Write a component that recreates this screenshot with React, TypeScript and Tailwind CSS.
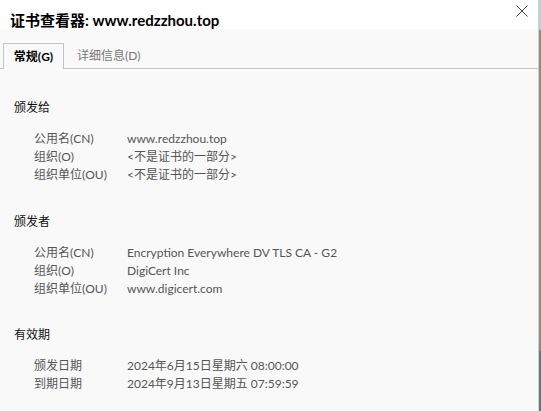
const FONT = { fontFamily: 'Lato, "Noto Sans CJK SC", sans-serif' }

type Row = { label: string; value: string }

const sections: { title: string; gap: string; rows: Row[] }[] = [
  {
    title: '颁发给',
    gap: 'mt-0',
    rows: [
      { label: '公用名(CN)', value: 'www.redzzhou.top' },
      { label: '组织(O)', value: '<不是证书的一部分>' },
      { label: '组织单位(OU)', value: '<不是证书的一部分>' },
    ],
  },
  {
    title: '颁发者',
    gap: 'mt-[29px]',
    rows: [
      { label: '公用名(CN)', value: 'Encryption Everywhere DV TLS CA - G2' },
      { label: '组织(O)', value: 'DigiCert Inc' },
      { label: '组织单位(OU)', value: 'www.digicert.com' },
    ],
  },
  {
    title: '有效期',
    gap: 'mt-[28px]',
    rows: [
      { label: '颁发日期', value: '2024年6月15日星期六 08:00:00' },
      { label: '到期日期', value: '2024年9月13日星期五 07:59:59' },
    ],
  },
]

function Section({ title, rows, gap }: { title: string; rows: Row[]; gap: string }) {
  return (
    <div className={gap}>
      <div className="pl-[14px] text-[12px] leading-[18px] text-[#111]">{title}</div>
      <div className="mt-[13px] pl-[34px]">
        {rows.map((r) => (
          <div key={r.label} className="flex text-[12px] leading-[18px] text-[#555]">
            <div className="w-[93px] shrink-0">{r.label}</div>
            <div>{r.value}</div>
          </div>
        ))}
      </div>
    </div>
  )
}

export default function App() {
  return (
    <div className="w-[541px] h-[411px] flex bg-white overflow-hidden" style={FONT}>
      <div className="w-[538px] h-full flex flex-col">
        {/* title bar */}
        <div className="h-[29px] bg-white flex items-center justify-between pl-[10px] pr-[10px]">
          <div className="text-[15px] font-bold text-black pt-[11px]">证书查看器: www.redzzhou.top</div>
          <svg width="12" height="12" viewBox="0 0 12 12" className="-mt-[7px]">
            <path d="M0.5 0.5 L11.5 11.5 M11.5 0.5 L0.5 11.5" stroke="#444" strokeWidth="1" />
          </svg>
        </div>

        <div className="flex-1 bg-[#f9f9f9] flex flex-col">
          {/* tabs */}
          <div className="flex items-end pt-[14px] border-b border-[#c4c4c4]">
            <div className="w-[3px]" />
            <div className="h-[26px] w-[61px] -mb-px flex items-center justify-center border border-b-0 border-[#c4c4c4] bg-[#f9f9f9] text-[12px] font-bold text-black">
              常规(G)
            </div>
            <div className="h-[25px] flex items-center pl-[13px] text-[12px] text-[#777]">详细信息(D)</div>
          </div>

          {/* content */}
          <div className="pt-[30px] flex flex-col">
            {sections.map((s) => (
              <Section key={s.title} title={s.title} rows={s.rows} gap={s.gap} />
            ))}
          </div>
        </div>
      </div>
      <div className="w-px h-full bg-[#cfcfcf]" />
      <div className="w-[2px] h-full flex flex-col">
        <div className="h-[30px] bg-[#c8ccd6]" />
        <div className="flex-1 bg-[#9b8577]" />
        <div className="h-[60px] bg-[#6d7384]" />
      </div>
    </div>
  )
}
